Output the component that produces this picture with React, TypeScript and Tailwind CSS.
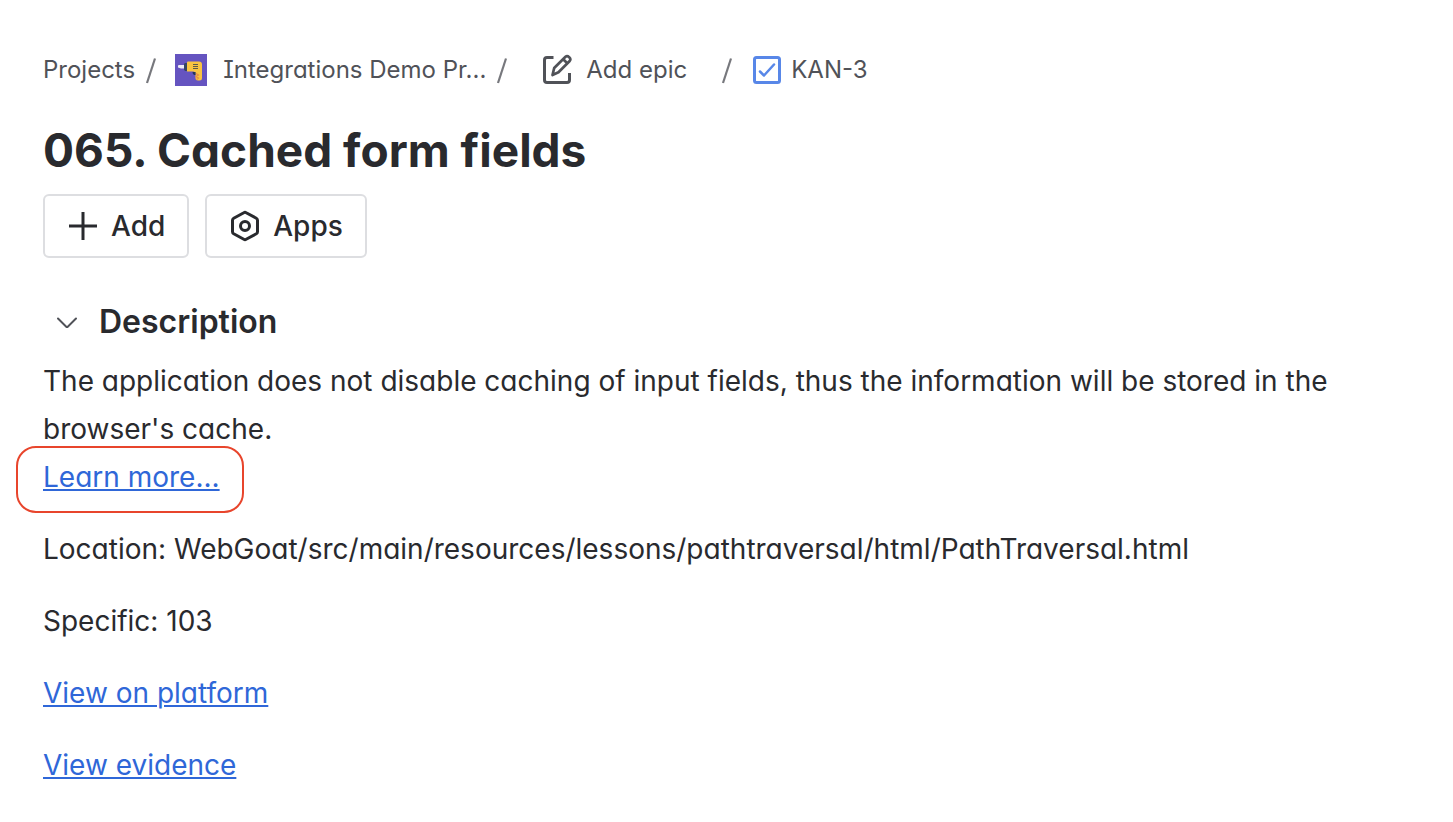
import type { ReactNode } from "react";

function Separator() {
  return (
    <svg className="h-7 w-2 overflow-visible" viewBox="0 0 8 28" fill="none" stroke="#77787d" strokeWidth="2.2" aria-hidden="true">
      <path d="M8 2.500 0 27" />
    </svg>
  );
}

function ProjectAvatar() {
  return (
    <svg className="size-8 shrink-0" viewBox="0 0 32 32" aria-hidden="true">
      <path fill="#6554c0" d="M0 0h32v32H0z" />
      <path fill="#eceaf6" d="M3 11.500l1-.5h5v3.500H6L3 13.500z" />
      <path fill="#344563" d="M9 10l1-1h2.500v8H10L9 15.500z" />
      <path fill="#f9c441" d="M12 8.500q0-1 1-1h11q3 0 3 3V24q0 2.500-2.500 2.500H23q-2.500 0-2.500-2.500v-5.500L18.500 17.500H12z" />
      <path fill="#243757" d="M17.500 18h3v3h-1.500q-1.500-1-1.500-3z" />
      <path stroke="#5e5a4a" strokeWidth="1" d="M18 10.500h5M18 12.500h5M18 14.500h5" />
      <path stroke="#e58a45" strokeWidth="1.200" fill="none" d="M21 19.500l2.500 1.500-2.500 1.500 2.500 1.500-2 1.500" />
    </svg>
  );
}

function EditIcon() {
  return (
    <svg className="size-8 shrink-0" viewBox="0 0 32 32" fill="none" stroke="currentColor" strokeWidth="3" aria-hidden="true">
      <path d="M11.500 3.500H5Q2.500 3.500 2.500 6v20Q2.500 28.500 5 28.500h20q2.500 0 2.500-2.500v-7" />
      <path
        strokeWidth="2.700"
        strokeLinejoin="round"
        d="M10.500 21l1.700-7L23.500 2.800q1.700-1.500 3.700.4t.5 3.800L16.500 18.300zM21.500 5.500l4 4"
      />
    </svg>
  );
}

function TaskIcon() {
  return (
    <svg className="size-7 shrink-0" viewBox="0 0 28 28" fill="none" stroke="#5887e8" aria-hidden="true">
      <rect x="1.500" y="1.500" width="25" height="25" rx="2" strokeWidth="3" />
      <path strokeWidth="2.500" strokeLinecap="round" strokeLinejoin="round" d="M7 15.500l4 4L21 8.500" />
    </svg>
  );
}

function AddIcon() {
  return (
    <svg className="size-8" viewBox="0 0 32 32" stroke="currentColor" strokeWidth="3" aria-hidden="true">
      <path d="M16 2v28M2 16h28" />
    </svg>
  );
}

function AppsIcon() {
  return (
    <svg className="size-8" viewBox="0 0 32 32" fill="none" stroke="currentColor" strokeWidth="3" aria-hidden="true">
      <path
        strokeLinejoin="round"
        d="M14.800 2.700q1.200-.7 2.400 0L27.300 8.200q1.200.7 1.200 2v11.600q0 1.300-1.200 2L17.200 29.300q-1.200.7-2.400 0L4.700 23.800q-1.200-.7-1.200-2V10.200q0-1.300 1.200-2z"
      />
      <circle cx="16" cy="16" r="4.500" />
    </svg>
  );
}

function ChevronIcon() {
  return (
    <svg className="h-3 w-5" viewBox="0 0 20 12" fill="none" stroke="#505258" strokeWidth="2" strokeLinecap="round" strokeLinejoin="round" aria-hidden="true">
      <path d="M1 2.500l9 9 9-9" />
    </svg>
  );
}

function ActionButton({ icon, children }: { icon: ReactNode; children: ReactNode }) {
  return (
    <button className="flex h-16 items-center gap-3 rounded-md border-2 border-[#dddee1] px-[22px] text-[28px] font-medium">
      {icon}
      {children}
    </button>
  );
}

function TextLink({ children }: { children: ReactNode }) {
  return (
    <a href="#" className="text-[#2f67d8] underline decoration-2 underline-offset-2">
      {children}
    </a>
  );
}

export default function App() {
  return (
    <main className="min-h-screen bg-white px-[43px] pt-[50px] pb-8 font-['Inter',sans-serif] text-[#292a2e] [font-feature-settings:'cv11','cv08']">
      <nav aria-label="Breadcrumb" className="flex h-10 items-center text-2xl whitespace-nowrap text-[#505258]">
        <a href="#" className="mr-3">Projects</a>
        <Separator />
        <a href="#" className="mr-3 ml-5 flex items-center gap-4">
          <ProjectAvatar />
          Integrations Demo Pr...
        </a>
        <Separator />
        <button className="mx-9 flex items-center gap-3">
          <EditIcon />
          Add epic
        </button>
        <Separator />
        <a href="#" className="ml-[22px] flex items-center gap-[10px]">
          <TaskIcon />
          KAN-3
        </a>
      </nav>

      <h1 className="mt-8 text-[46px] leading-14 font-bold">065. Cached form fields</h1>

      <div className="mt-4 flex gap-4">
        <ActionButton icon={<AddIcon />}>Add</ActionButton>
        <ActionButton icon={<AppsIcon />}>Apps</ActionButton>
      </div>

      <section className="mt-11">
        <div className="flex h-10 items-center">
          <button aria-label="Collapse description" className="flex w-14 justify-start pl-[14px]">
            <ChevronIcon />
          </button>
          <h2 className="text-[32px] leading-10 font-semibold">Description</h2>
        </div>
        <div className="mt-[15px] space-y-6 text-[28px] leading-12">
          <p>
            The application does not disable caching of input fields, thus the information will be stored in the
            browser's cache.
            <br />
            <span className="relative">
              <TextLink>Learn more...</TextLink>
              <span className="pointer-events-none absolute -top-[14px] -right-6 -left-[27px] h-[67px] rounded-[20px] border-2 border-[#e8452c]" />
            </span>
          </p>
          <p>Location: WebGoat/src/main/resources/lessons/pathtraversal/html/PathTraversal.html</p>
          <p>Specific: 103</p>
          <p>
            <TextLink>View on platform</TextLink>
          </p>
          <p>
            <TextLink>View evidence</TextLink>
          </p>
        </div>
      </section>
    </main>
  );
}
